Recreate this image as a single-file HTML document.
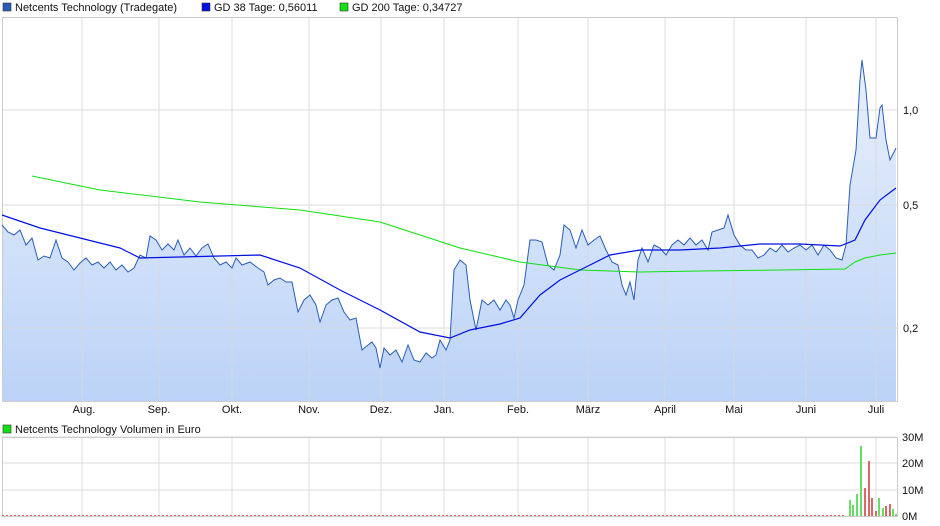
<!DOCTYPE html>
<html><head><meta charset="utf-8"><style>
body{margin:0;background:#fff;font-family:"Liberation Sans",sans-serif;}
svg{display:block}
text{font-family:"Liberation Sans",sans-serif;font-size:11px;fill:#111}
</style></head><body>
<svg width="940" height="526" viewBox="0 0 940 526">
<defs><linearGradient id="g" x1="0" y1="0" x2="0" y2="1"><stop offset="0" stop-color="#e8f0fc"/><stop offset="1" stop-color="#bcd3f7"/></linearGradient></defs>
<!-- legend -->
<rect x="3" y="3" width="8" height="8" fill="#2a5db8" stroke="#333" stroke-width=".6"/><text x="15" y="11">Netcents Technology (Tradegate)</text>
<rect x="202" y="3" width="8" height="8" fill="#0010e0" stroke="#333" stroke-width=".6"/><text x="214" y="11">GD 38 Tage: 0,56011</text>
<rect x="340" y="3" width="8" height="8" fill="#10e010" stroke="#333" stroke-width=".6"/><text x="352" y="11">GD 200 Tage: 0,34727</text>
<!-- price area fill -->
<polygon fill="url(#g)" points="2,401 2,225 8,232 14,235 20,230 26,245 32,238 38,260 44,256 50,258 56,240 62,258 68,262 74,270 80,263 86,258 92,265 98,262 104,268 110,262 116,270 122,265 128,272 134,268 140,255 146,258 150,236 156,240 162,250 168,244 174,250 178,240 184,255 190,248 196,256 202,248 208,244 214,258 220,265 226,262 232,268 236,258 242,265 250,262 258,268 264,272 268,285 274,280 280,278 286,282 292,282 298,312 304,300 310,295 316,305 320,322 326,305 332,300 338,298 344,312 350,320 356,318 362,350 368,345 372,342 376,348 380,368 384,348 390,355 396,350 402,362 408,345 414,360 420,362 426,353 432,358 436,355 440,340 446,350 450,340 454,270 460,260 466,265 470,300 476,330 482,300 488,305 494,300 500,310 506,300 510,305 514,318 518,300 524,285 530,240 536,240 542,242 548,265 554,270 560,255 564,225 570,230 576,248 582,230 588,245 594,240 600,236 606,250 612,262 618,265 622,285 626,295 630,282 634,300 638,260 642,248 648,262 654,245 660,248 666,255 672,245 678,240 684,245 690,238 696,245 702,240 708,250 712,232 718,230 724,228 728,215 734,235 740,245 746,250 752,250 758,258 764,255 770,248 776,252 782,245 788,252 794,248 800,245 806,250 812,245 818,255 824,245 830,250 836,258 842,260 846,245 850,185 856,150 860,80 862,60 866,90 870,138 876,138 880,108 882,105 886,140 890,160 896,148 896,401"/>
<!-- grid -->
<g stroke="#d8d8d8" stroke-width="1" fill="none" opacity=".85">
<path d="M82,17V401M159,17V401M232,17V401M309,17V401M381,17V401M444,17V401M518,17V401M588,17V401M665,17V401M734,17V401M806,17V401M876,17V401"/>
<path d="M2,110H897M2,205H897M2,328H897"/>
<path d="M82,437V516M159,437V516M232,437V516M309,437V516M381,437V516M444,437V516M518,437V516M588,437V516M665,437V516M734,437V516M806,437V516M876,437V516"/>
<path d="M2,437H897M2,463H897M2,490H897"/>
</g>
<rect x="2.5" y="17.5" width="895" height="384" fill="none" stroke="#ccc"/>
<rect x="2.5" y="437.5" width="895" height="79" fill="none" stroke="#ccc"/>
<!-- price line -->
<polyline fill="none" stroke="#2a5db8" stroke-width="1" points="2,225 8,232 14,235 20,230 26,245 32,238 38,260 44,256 50,258 56,240 62,258 68,262 74,270 80,263 86,258 92,265 98,262 104,268 110,262 116,270 122,265 128,272 134,268 140,255 146,258 150,236 156,240 162,250 168,244 174,250 178,240 184,255 190,248 196,256 202,248 208,244 214,258 220,265 226,262 232,268 236,258 242,265 250,262 258,268 264,272 268,285 274,280 280,278 286,282 292,282 298,312 304,300 310,295 316,305 320,322 326,305 332,300 338,298 344,312 350,320 356,318 362,350 368,345 372,342 376,348 380,368 384,348 390,355 396,350 402,362 408,345 414,360 420,362 426,353 432,358 436,355 440,340 446,350 450,340 454,270 460,260 466,265 470,300 476,330 482,300 488,305 494,300 500,310 506,300 510,305 514,318 518,300 524,285 530,240 536,240 542,242 548,265 554,270 560,255 564,225 570,230 576,248 582,230 588,245 594,240 600,236 606,250 612,262 618,265 622,285 626,295 630,282 634,300 638,260 642,248 648,262 654,245 660,248 666,255 672,245 678,240 684,245 690,238 696,245 702,240 708,250 712,232 718,230 724,228 728,215 734,235 740,245 746,250 752,250 758,258 764,255 770,248 776,252 782,245 788,252 794,248 800,245 806,250 812,245 818,255 824,245 830,250 836,258 842,260 846,245 850,185 856,150 860,80 862,60 866,90 870,138 876,138 880,108 882,105 886,140 890,160 896,148"/>
<polyline fill="none" stroke="#10e010" stroke-width="1" points="32,176 100,190 200,202 300,210 380,222 420,235 460,248 520,262 580,270 640,272 700,271 780,270 845,269 855,262 865,258 880,255 896,253"/>
<polyline fill="none" stroke="#0010e0" stroke-width="1.2" points="2,215 40,228 80,238 120,248 140,258 180,257 260,255 300,268 340,290 380,310 420,332 450,338 470,330 500,324 520,318 540,295 560,280 590,265 610,255 640,250 680,250 720,248 760,244 800,244 840,246 855,240 865,220 880,200 896,188"/>
<!-- y labels -->
<text x="903" y="114">1,0</text><text x="903" y="209">0,5</text><text x="903" y="332">0,2</text>
<!-- x labels -->
<g text-anchor="middle"><text x="84" y="413">Aug.</text><text x="159" y="413">Sep.</text><text x="232" y="413">Okt.</text><text x="309" y="413">Nov.</text><text x="381" y="413">Dez.</text><text x="444" y="413">Jan.</text><text x="518" y="413">Feb.</text><text x="588" y="413">März</text><text x="665" y="413">April</text><text x="734" y="413">Mai</text><text x="806" y="413">Juni</text><text x="876" y="413">Juli</text></g>
<!-- volume legend -->
<rect x="3" y="425" width="8" height="8" fill="#10e010" stroke="#333" stroke-width=".6"/><text x="15" y="433">Netcents Technology Volumen in Euro</text>
<g><text x="902" y="441">30M</text><text x="902" y="467">20M</text><text x="902" y="494">10M</text><text x="902" y="520">0M</text></g>
<!-- volume bars -->
<line x1="2" y1="515.5" x2="845" y2="515.5" stroke="#e06060" stroke-dasharray="2,2"/>
<g fill="#66dd66"><rect x="849" y="500" width="2" height="16"/><rect x="852" y="505" width="2" height="11"/><rect x="856" y="494" width="2" height="22"/><rect x="860" y="446" width="2" height="70"/><rect x="878" y="498" width="2" height="18"/><rect x="882" y="508" width="2" height="8"/><rect x="892" y="509" width="2" height="7"/><rect x="895" y="514" width="2" height="2"/></g>
<g fill="#dd6666"><rect x="864" y="488" width="2" height="28"/><rect x="868" y="461" width="2" height="55"/><rect x="871" y="498" width="2" height="18"/><rect x="875" y="511" width="2" height="5"/><rect x="885" y="506" width="2" height="10"/><rect x="889" y="504" width="2" height="12"/></g>
</svg>
</body></html>
